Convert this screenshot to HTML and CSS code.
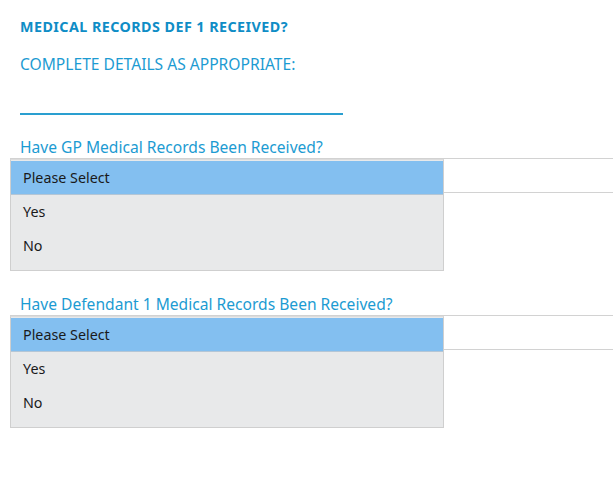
FILE: index.html
```html
<!DOCTYPE html>
<html>
<head>
<meta charset="utf-8">
<link rel="stylesheet" href="styles.css">
</head>
<body>
<div class="page">
  <h1 class="title">MEDICAL RECORDS DEF 1 RECEIVED?</h1>
  <p class="subtitle">COMPLETE DETAILS AS APPROPRIATE:</p>
  <div class="rule"></div>

  <div class="field first">
    <label class="label">Have GP Medical Records Been Received?</label>
    <div class="select">
      <ul class="list">
        <li class="opt selected">Please Select</li>
        <li class="opt">Yes</li>
        <li class="opt">No</li>
      </ul>
    </div>
  </div>

  <div class="field second">
    <label class="label">Have Defendant 1 Medical Records Been Received?</label>
    <div class="select">
      <ul class="list">
        <li class="opt selected">Please Select</li>
        <li class="opt">Yes</li>
        <li class="opt">No</li>
      </ul>
    </div>
  </div>
</div>
</body>
</html>
```

FILE: styles.css
```css
html, body {
  margin: 0;
  padding: 0;
  background: #ffffff;
}
body {
  font-family: "Noto Sans", "Open Sans", "Liberation Sans", sans-serif;
  width: 613px;
  height: 500px;
  overflow: hidden;
}
.page {
  padding-top: 18px;
}
.title {
  margin: 0 0 0 20px;
  font-size: 14.3px;
  line-height: 18px;
  font-weight: 700;
  letter-spacing: 0.45px;
  color: #0f8dc6;
}
.subtitle {
  margin: 18px 0 0 20px;
  font-size: 15.6px;
  line-height: 20px;
  color: #1c9bd2;
}
.rule {
  margin: 39px 0 0 20px;
  width: 323px;
  height: 0;
  border-top: 2px solid #2a9fd0;
}
.field {
  display: flex;
  flex-direction: column;
}
.field.first {
  margin-top: 22px;
}
.field.second {
  margin-top: 101px;
}
.label {
  margin-left: 20px;
  font-size: 15.6px;
  line-height: 20px;
  color: #1c9bd2;
}
.select {
  position: relative;
  margin-left: 10px;
  height: 33px;
  border-top: 1px solid #d2d2d2;
  border-bottom: 1px solid #d2d2d2;
  margin-top: 1px;
}
.list {
  position: absolute;
  top: 0;
  left: 0;
  width: 432px;
  margin: 0;
  padding: 1px 0 7px 0;
  list-style: none;
  background: #e8e9ea;
  border: 1px solid #cfcfcf;
  border-top-color: #dcdcdc;
  z-index: 2;
}
.opt {
  height: 34px;
  line-height: 34px;
  padding-left: 12px;
  font-size: 14.3px;
  color: #1a1a1a;
}
.opt.selected {
  background: #83bff0;
  border-bottom: 1px solid #b4c6d6;
  height: 33px;
  line-height: 33px;
}
```
